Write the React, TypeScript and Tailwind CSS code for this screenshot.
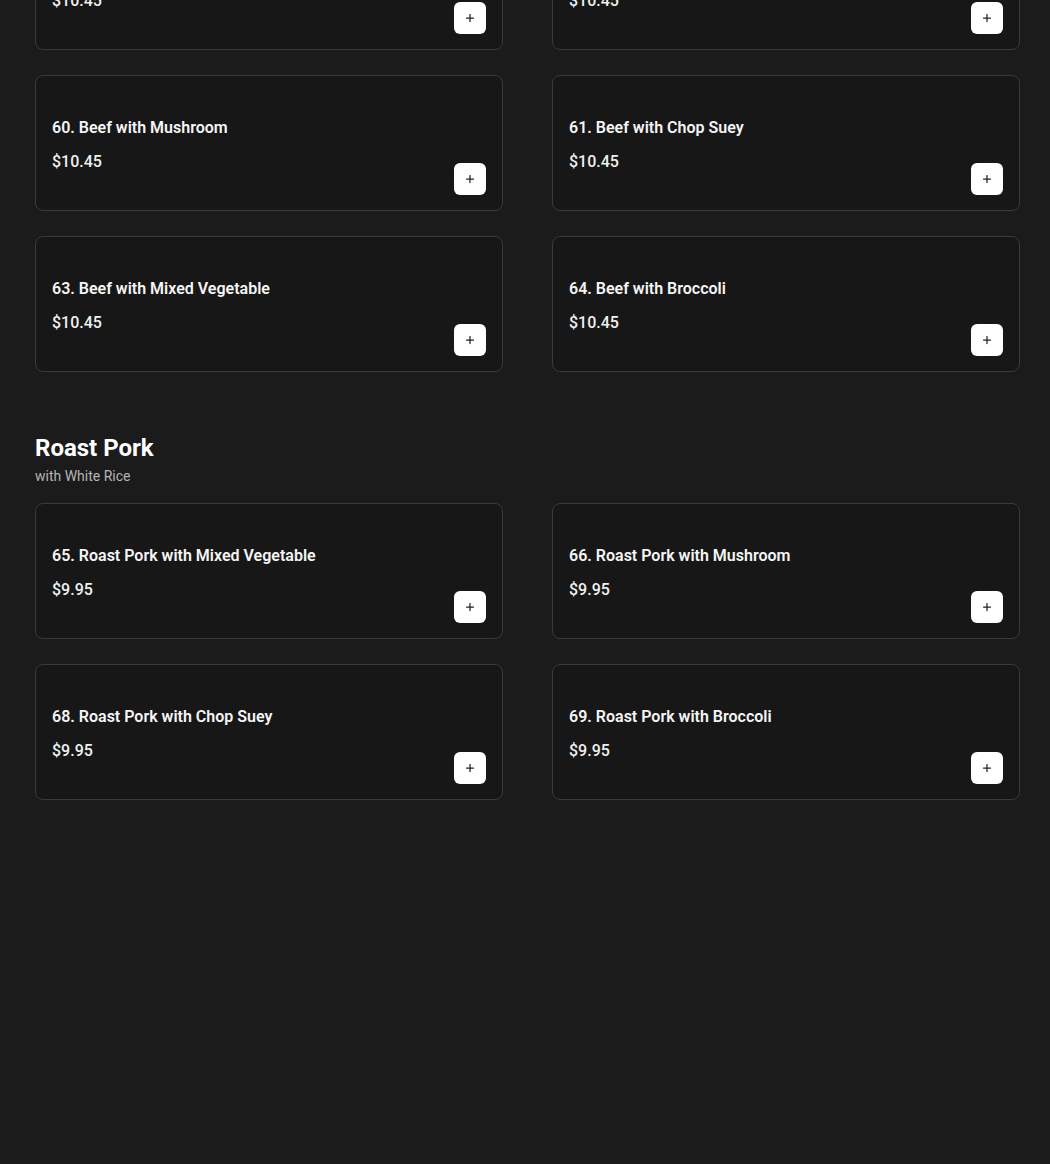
import { Plus } from 'lucide-react';

type Item = { id: number; name: string; price: string };

const BEEF: Item[] = [
  { id: 57, name: 'Beef with Snow Peas', price: '$10.45' },
  { id: 58, name: 'Beef with String Bean', price: '$10.45' },
  { id: 60, name: 'Beef with Mushroom', price: '$10.45' },
  { id: 61, name: 'Beef with Chop Suey', price: '$10.45' },
  { id: 63, name: 'Beef with Mixed Vegetable', price: '$10.45' },
  { id: 64, name: 'Beef with Broccoli', price: '$10.45' },
];

const ROAST_PORK: Item[] = [
  { id: 65, name: 'Roast Pork with Mixed Vegetable', price: '$9.95' },
  { id: 66, name: 'Roast Pork with Mushroom', price: '$9.95' },
  { id: 68, name: 'Roast Pork with Chop Suey', price: '$9.95' },
  { id: 69, name: 'Roast Pork with Broccoli', price: '$9.95' },
];

function ItemCard({ item }: { item: Item }) {
  return (
    <div className="h-[136px] rounded-lg border border-[#3a3a3a] bg-[#171717] px-4 pt-[40px] flex flex-col">
      <h3 className="text-base leading-6 font-semibold text-[#f5f5f5]">
        {item.id}. {item.name}
      </h3>
      <div className="flex items-start justify-between">
        <p className="mt-[10px] text-base leading-6 font-medium text-[#f0f0f0]">{item.price}</p>
        <button className="mt-[23px] w-8 h-8 rounded-md bg-white flex items-center justify-center text-[#222]">
          <Plus size={12} strokeWidth={2.5} />
        </button>
      </div>
    </div>
  );
}

export default function App() {
  return (
    <div className="min-h-[1164px] bg-[#1b1b1b] overflow-hidden" style={{ fontFamily: 'Roboto, "Noto Sans", sans-serif' }}>
      <div className="pl-[35px] pr-[30px] -mt-[86px] pb-10">
        <section className="grid grid-cols-2 gap-x-[49px] gap-y-[25px]">
          {BEEF.map(item => <ItemCard key={item.id} item={item} />)}
        </section>

        <section className="mt-[60px]">
          <h2 className="text-2xl leading-8 font-bold text-white">Roast Pork</h2>
          <p className="text-sm leading-5 text-[#b5b5b5] mt-[2px]">with White Rice</p>
          <div className="mt-[17px] grid grid-cols-2 gap-x-[49px] gap-y-[25px]">
            {ROAST_PORK.map(item => <ItemCard key={item.id} item={item} />)}
          </div>
        </section>
      </div>
    </div>
  );
}
